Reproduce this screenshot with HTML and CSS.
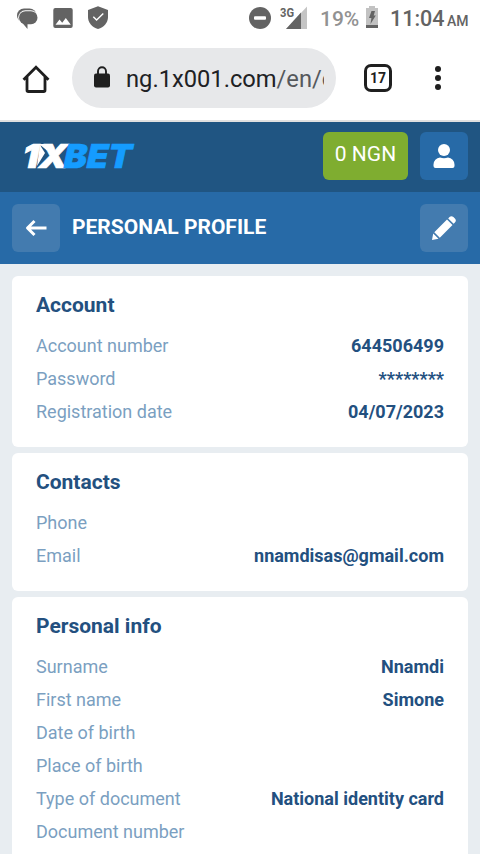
FILE: index.html
```html
<!DOCTYPE html>
<html lang="en">
<head>
<meta charset="utf-8">
<meta name="viewport" content="width=device-width, initial-scale=1">
<title>Personal profile</title>
<link rel="stylesheet" href="styles.css">
</head>
<body>
<div class="screen">
  <div class="status">
    <div class="status-left">
      <svg width="22" height="24" viewBox="0 0 22 24"><rect y="2.500" width="19.500" height="14" rx="7" fill="#636363"/><rect x="1.200" y="4.300" width="19.800" height="14.500" rx="7.200" fill="#fff"/><rect x="2" y="5.200" width="18.500" height="13" rx="6.500" fill="#636363"/><path d="M5 16.500l5.500 6.500v-6z" fill="#636363"/></svg>
      <svg width="20" height="24" viewBox="0 0 20 24"><rect x=".3" y="2" width="19.400" height="20" rx="2" fill="#636363"/><path d="M2.500 18.700l4-5.200 2.700 3.200 3.600-4.800 5 6.800z" fill="#fff"/></svg>
      <svg width="22" height="24" viewBox="0 0 22 24"><path d="M11 .3L21 4v7c0 5.600-4 10.300-10 12C5 21.300 1 16.600 1 11V4z" fill="#636363"/><path d="M6.300 10.800l3.300 3.300 6.700-6.600" fill="none" stroke="#fff" stroke-width="1.400"/></svg>
    </div>
    <div class="status-right">
      <svg class="dnd" width="22" height="22" viewBox="0 0 22 22"><circle cx="11" cy="11" r="11" fill="#636363"/><rect x="5" y="9.300" width="12" height="3.500" rx="1" fill="#fff"/></svg>
      <svg class="signal" width="28" height="24" viewBox="0 0 28 24"><path d="M27 .5V23H6z" fill="#c4c4c4"/><path d="M21 6.500V23H6z" fill="#636363"/><text class="network" x="0" y="11" textLength="14" lengthAdjust="spacingAndGlyphs">3G</text></svg>
      <span class="percent">19%</span>
      <svg class="battery" width="12" height="22" viewBox="0 0 12 22"><path d="M3 0h6v2h3v20H0V2h3z" fill="#c2c2c2"/><path d="M0 19h12v3H0z" fill="#636363"/><path d="M5.500 5H9L7.700 9.500h2.100L4.500 18l.9-6H3z" fill="#636363"/></svg>
      <span class="clock">11:04</span><span class="ampm">AM</span>
    </div>
  </div>

  <div class="browser">
    <svg class="home" width="28" height="28" viewBox="0 0 28 28" fill="none" stroke="#1f1f1f" stroke-width="2.800"><path d="M1.500 14.700L14 2.200l12.500 12.500M5 12v13.200q0 1.300 1.300 1.300h15.400q1.300 0 1.300-1.300V12"/></svg>
    <div class="address">
      <svg class="lock" width="16" height="22" viewBox="0 0 16 22"><path d="M4 9V5.300a4 4.100 0 0 1 8 0V9" fill="none" stroke="#1f1f1f" stroke-width="1.900"/><rect y="7.500" width="16" height="14" rx="2" fill="#1f1f1f"/></svg>
      <div class="url">ng.1x001.com<span>/en/o</span></div>
    </div>
    <div class="tabs">17</div>
    <svg class="dots" width="6" height="26" viewBox="0 0 6 26" fill="#1f1f1f"><circle cx="3" cy="4" r="3"/><circle cx="3" cy="13" r="3"/><circle cx="3" cy="22" r="3"/></svg>
  </div>

  <header class="site">
    <svg class="logo" width="112" height="26" viewBox="0 0 112 26"><g transform="translate(0 25) skewX(-12)"><text class="logo-white" x="-2.500" y="0" textLength="45" lengthAdjust="spacingAndGlyphs">1X</text><text class="logo-blue" x="39" y="0" textLength="68" lengthAdjust="spacingAndGlyphs">BET</text></g><path d="M16 1h13l-5 6.500zM17 2l5 8-8 13z" fill="#fff"/></svg>
    <div class="balance">0 NGN</div>
    <div class="button user"><svg width="22" height="26" viewBox="0 0 22 26" fill="#fff"><circle cx="11" cy="7" r="6"/><path d="M.5 21.500a7 7 0 0 1 6.500-7q4 1.500 8 0a7 7 0 0 1 6.500 7V23q0 2-2 2h-17q-2 0-2-2z"/></svg></div>
  </header>

  <div class="heading">
    <div class="button"><svg width="22" height="18" viewBox="0 0 22 18" fill="none" stroke="#fff" stroke-width="3"><path d="M2 9h19.500M9.500 2L2.500 9l7 7" stroke-linejoin="round"/></svg></div>
    <h1>PERSONAL PROFILE</h1>
    <div class="button"><svg width="24" height="24" viewBox="0 0 24 24" fill="#fff"><path d="M0 24l1.200-6.500 5.300 5.300zM2.300 16.200L15 3.500 20.500 9 7.800 21.700zM16.200 2.400L17.500 1.100q1.900-1.900 3.900 0l1.500 1.500q1.900 1.900 0 3.900l-1.300 1.300z"/></svg></div>
  </div>

  <main>
    <section class="card">
      <h2>Account</h2>
      <div class="row"><span>Account number</span><b>644506499</b></div>
      <div class="row"><span>Password</span><b>********</b></div>
      <div class="row"><span>Registration date</span><b>04/07/2023</b></div>
    </section>
    <section class="card">
      <h2>Contacts</h2>
      <div class="row"><span>Phone</span></div>
      <div class="row"><span>Email</span><b>nnamdisas@gmail.com</b></div>
    </section>
    <section class="card">
      <h2>Personal info</h2>
      <div class="row"><span>Surname</span><b>Nnamdi</b></div>
      <div class="row"><span>First name</span><b>Simone</b></div>
      <div class="row"><span>Date of birth</span></div>
      <div class="row"><span>Place of birth</span></div>
      <div class="row"><span>Type of document</span><b>National identity card</b></div>
      <div class="row"><span>Document number</span></div>
    </section>
  </main>
</div>
</body>
</html>
```
FILE: styles.css
```css
* { box-sizing: border-box; }
body { margin: 0; font-family: Roboto, "Liberation Sans", sans-serif; background: #e8edf1; }
svg { display: block; flex: none; }
.screen { width: 480px; height: 854px; overflow: hidden; }

.status { height: 36px; background: #fff; display: flex; justify-content: space-between; color: #636363; }
.status-left { display: flex; gap: 15px; padding: 6px 0 0 17px; }
.status-left svg + svg { margin-left: -1px; }
.status-right { display: flex; padding-right: 12px; }
.dnd { margin: 7px 9px 0 0; }
.signal { margin: 6px 12px 0 0; }
.network { font: 700 12px Roboto, sans-serif; fill: #636363; }
.percent { width: 39px; margin-right: 7px; font-size: 21px; line-height: 38px; font-weight: 500; color: #929292; white-space: nowrap; }
.battery { margin: 6px 12px 0 0; }
.clock { font-size: 21.5px; line-height: 38px; font-weight: 500; width: 54px; }
.ampm { font-size: 14px; line-height: 43px; font-weight: 500; margin-left: 3px; width: 21px; }

.browser { height: 86px; padding: 0 39px 0 22px; background: #fff; border-bottom: 2px solid #e0e0e0; display: flex; align-items: center; }
.home { margin-top: 1px; }
.address { width: 264px; height: 60px; margin-left: 22px; border-radius: 30px; background: #e7e8ea; display: flex; align-items: center; padding: 0 12px 0 22px; }
.lock { margin-top: -2px; }
.url { margin: 2px 0 0 16px; width: 198px; overflow: hidden; white-space: nowrap; font-size: 23.7px; line-height: 36px; color: #202124; }
.url span { color: #55585c; }
.tabs { width: 28px; height: 28px; margin-left: 28px; border: 3px solid #1f1f1f; border-radius: 7px; font-size: 14px; line-height: 22px; font-weight: 700; text-align: center; color: #1f1f1f; }
.dots { margin-left: auto; }

.site { height: 70px; background: #205582; padding: 0 12px 2px; display: flex; align-items: center; }
.logo { margin-left: 11px; overflow: visible; }
.logo-white, .logo-blue { font: 900 33px Inter, sans-serif; fill: #fff; stroke: #fff; stroke-width: .7px; }
.logo-blue { fill: #159cff; stroke: #159cff; }
.balance { width: 85px; height: 48px; margin: 0 12px 0 auto; border-radius: 6px; background: #7fad30; color: #fff; font-size: 21px; line-height: 44px; text-align: center; }
.button { width: 48px; height: 48px; border-radius: 6px; background: #437baf; display: flex; align-items: center; justify-content: center; }
.user { background: #276aa7; }

.heading { height: 72px; padding: 0 12px; background: #276aa7; display: flex; align-items: center; justify-content: space-between; }
h1 { flex: 1; margin: 0 0 2px 12px; font-size: 21px; line-height: 24px; font-weight: 700; color: #fff; }

main { padding: 12px; display: flex; flex-direction: column; gap: 6px; }
.card { background: #fff; border-radius: 6px; padding: 17px 24px 19px; }
h2 { margin: 0 0 12px; font-size: 21px; line-height: 24px; font-weight: 700; color: #23507f; }
.row { height: 33px; display: flex; align-items: center; justify-content: space-between; font-size: 18px; line-height: 24px; color: #7b9fc1; }
.row b { font-weight: 700; color: #23507f; }
```
